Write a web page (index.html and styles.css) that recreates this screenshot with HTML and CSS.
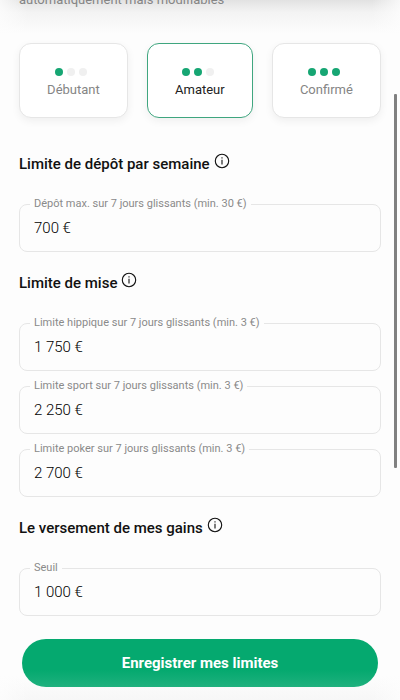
FILE: index.html
```html
<!DOCTYPE html>
<html lang="fr">
<head>
  <meta charset="UTF-8">
  <meta name="viewport" content="width=device-width, initial-scale=1.0">
  <title>Mes limites</title>
  <link rel="stylesheet" href="styles.css">
</head>
<body>
  <header class="intro">
    <p>automatiquement mais modifiables</p>
  </header>

  <main class="limits">
    <div class="profiles">
      <button type="button" class="profile">
        <span class="dots"><i class="dot on"></i><i class="dot"></i><i class="dot"></i></span>
        Débutant
      </button>
      <button type="button" class="profile selected">
        <span class="dots"><i class="dot on"></i><i class="dot on"></i><i class="dot"></i></span>
        Amateur
      </button>
      <button type="button" class="profile">
        <span class="dots"><i class="dot on"></i><i class="dot on"></i><i class="dot on"></i></span>
        Confirmé
      </button>
    </div>

    <section class="group">
      <h2>Limite de dépôt par semaine
        <svg class="info" viewBox="0 0 16 16"><circle cx="8" cy="8" r="6.7"/><path d="M8 6.8v4.8M8 4.2v1.3"/></svg>
      </h2>
      <fieldset class="field">
        <legend><label for="depot">Dépôt max. sur 7 jours glissants (min. 30 €)</label></legend>
        <input id="depot" type="text" value="700 €">
      </fieldset>
    </section>

    <section class="group">
      <h2>Limite de mise
        <svg class="info" viewBox="0 0 16 16"><circle cx="8" cy="8" r="6.7"/><path d="M8 6.8v4.8M8 4.2v1.3"/></svg>
      </h2>
      <fieldset class="field">
        <legend><label for="hippique">Limite hippique sur 7 jours glissants (min. 3 €)</label></legend>
        <input id="hippique" type="text" value="1 750 €">
      </fieldset>
      <fieldset class="field">
        <legend><label for="sport">Limite sport sur 7 jours glissants (min. 3 €)</label></legend>
        <input id="sport" type="text" value="2 250 €">
      </fieldset>
      <fieldset class="field">
        <legend><label for="poker">Limite poker sur 7 jours glissants (min. 3 €)</label></legend>
        <input id="poker" type="text" value="2 700 €">
      </fieldset>
    </section>

    <section class="group">
      <h2>Le versement de mes gains
        <svg class="info" viewBox="0 0 16 16"><circle cx="8" cy="8" r="6.7"/><path d="M8 6.8v4.8M8 4.2v1.3"/></svg>
      </h2>
      <fieldset class="field">
        <legend><label for="seuil">Seuil</label></legend>
        <input id="seuil" type="text" value="1 000 €">
      </fieldset>
    </section>

    <button type="submit" class="save">Enregistrer mes limites</button>
  </main>

  <div class="scroll-thumb"></div>
</body>
</html>
```

FILE: styles.css
```css
* {
  margin: 0;
  padding: 0;
  box-sizing: border-box;
}

body {
  height: 100vh;
  overflow: hidden;
  background:
    linear-gradient(90deg, rgba(253, 253, 253, 0.8), rgba(253, 253, 253, 0) 28px, rgba(253, 253, 253, 0) calc(100% - 28px), rgba(253, 253, 253, 0.8)),
    linear-gradient(#e2e2e2, #f3f3f3 12px, #fdfdfd 34px, #fdfdfd calc(100% - 24px), #f7f7f7);
  font-family: Roboto, "Liberation Sans", sans-serif;
  color: #111;
}

/* last line of the text scrolled under the top edge */
.intro {
  display: flex;
  align-items: flex-end;
  height: 10px;
  padding: 0 19px;
  overflow: hidden;
  font-size: 13px;
  line-height: 20px;
  color: #858585;
}

.limits {
  display: flex;
  flex-direction: column;
  padding: 33px 19px 0;
}

.profiles {
  display: flex;
  gap: 19px;
  margin-bottom: 34px;
}

.profile {
  flex: 1 1 auto;
  display: flex;
  flex-direction: column;
  align-items: center;
  height: 75px;
  padding-top: 24px;
  border: 1px solid #e6e6e6;
  border-radius: 12px;
  background: #fff;
  box-shadow: 0 3px 8px rgba(0, 0, 0, 0.06);
  font: 13px/20px Roboto, "Liberation Sans", sans-serif;
  color: #858585;
  cursor: pointer;
}

.profile.selected {
  border-color: #3fa67f;
  color: #222;
}

.dots {
  display: flex;
  margin-bottom: 4px;
}

.dot {
  width: 8px;
  height: 8px;
  margin-right: 4px;
  border-radius: 50%;
  background: #f0f0f0;
}

.dot.on {
  background: #16a673;
}

.group {
  margin-bottom: 19px;
}

h2 {
  display: flex;
  gap: 4px;
  margin-bottom: 20px;
  font-size: 15px;
  font-weight: 500;
  line-height: 24px;
}

.info {
  width: 16px;
  height: 16px;
  margin-top: 1px;
  fill: none;
  stroke: #111;
  stroke-width: 1.1;
}

.field {
  min-width: 0;
  padding: 0 10px;
  border: 1px solid #e6e6e6;
  border-radius: 8px;
}

.field + .field {
  margin-top: 7px;
}

legend {
  padding: 0 4px;
  font-size: 11px;
  line-height: 16px;
  color: #8a8a8a;
}

label {
  display: block;
}

.field input {
  display: block;
  width: 100%;
  height: 39px;
  padding: 0 4px 7px;
  border: 0;
  outline: 0;
  background: transparent;
  font: 300 15px/20px Roboto, "Liberation Sans", sans-serif;
  color: #000;
}

.save {
  height: 48px;
  margin: 4px 3px 0;
  border: 0;
  border-radius: 24px;
  background: linear-gradient(#05a96f 65%, #1fb17e);
  font: 700 15px/20px Roboto, "Liberation Sans", sans-serif;
  color: #fff;
  cursor: pointer;
}

.scroll-thumb {
  position: fixed;
  top: 94px;
  right: 3px;
  width: 3px;
  height: 374px;
  border-radius: 1px;
  background: #808080;
}
```
